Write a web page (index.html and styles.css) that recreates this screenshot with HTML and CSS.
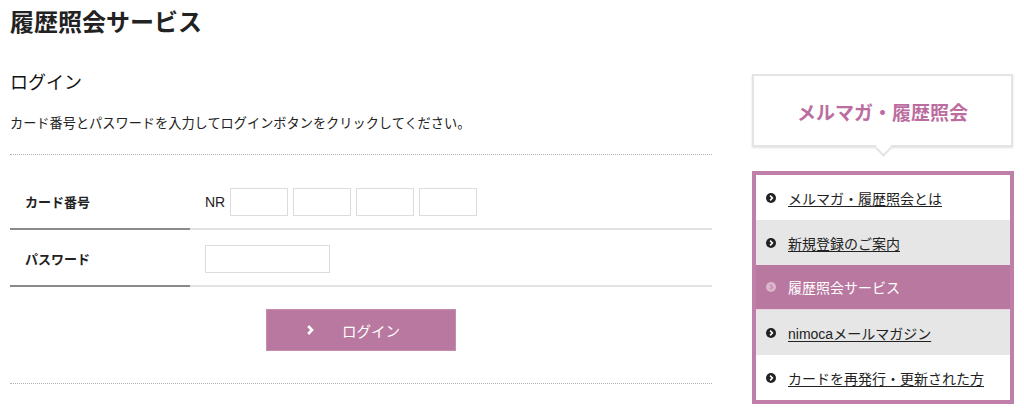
FILE: index.html
```html
<!DOCTYPE html>
<html lang="ja">
<head>
<meta charset="utf-8">
<title>履歴照会サービス</title>
<link rel="stylesheet" href="styles.css">
</head>
<body>
<div class="page">
  <main class="main">
    <h1 class="page-title">履歴照会サービス</h1>
    <h2 class="section-title">ログイン</h2>
    <p class="lead">カード番号とパスワードを入力してログインボタンをクリックしてください。</p>
    <div class="dotted"></div>
    <div class="form">
      <div class="row">
        <div class="label">カード番号</div>
        <div class="field">
          <span class="prefix">NR</span>
          <span class="input short"></span>
          <span class="input short"></span>
          <span class="input short"></span>
          <span class="input short"></span>
        </div>
      </div>
      <div class="row">
        <div class="label">パスワード</div>
        <div class="field">
          <span class="input long"></span>
        </div>
      </div>
    </div>
    <div class="actions">
      <button class="btn" type="button">
        <svg class="btn-chev" width="7" height="10" viewBox="0 0 7 10"><path d="M1.2 1 L5 5 L1.2 9" fill="none" stroke="#fff" stroke-width="2.6"/></svg>
        <span>ログイン</span>
      </button>
    </div>
    <div class="dotted"></div>
  </main>
  <aside class="side">
    <div class="bubble">メルマガ・履歴照会</div>
    <ul class="nav">
      <li class="nav-item white"><span class="dot"><svg width="10" height="10" viewBox="0 0 10 10"><path d="M4.1 2.6 L6.4 5 L4.1 7.4" fill="none" stroke="#fff" stroke-width="1.6"/></svg></span><a href="#">メルマガ・履歴照会とは</a></li>
      <li class="nav-item gray"><span class="dot"><svg width="10" height="10" viewBox="0 0 10 10"><path d="M4.1 2.6 L6.4 5 L4.1 7.4" fill="none" stroke="#fff" stroke-width="1.6"/></svg></span><a href="#">新規登録のご案内</a></li>
      <li class="nav-item active"><span class="dot"><svg width="10" height="10" viewBox="0 0 10 10"><path d="M4.1 2.6 L6.4 5 L4.1 7.4" fill="none" stroke="#c98db3" stroke-width="1.6"/></svg></span><span class="nav-current">履歴照会サービス</span></li>
      <li class="nav-item gray"><span class="dot"><svg width="10" height="10" viewBox="0 0 10 10"><path d="M4.1 2.6 L6.4 5 L4.1 7.4" fill="none" stroke="#fff" stroke-width="1.6"/></svg></span><a href="#">nimocaメールマガジン</a></li>
      <li class="nav-item white"><span class="dot"><svg width="10" height="10" viewBox="0 0 10 10"><path d="M4.1 2.6 L6.4 5 L4.1 7.4" fill="none" stroke="#fff" stroke-width="1.6"/></svg></span><a href="#">カードを再発行・更新された方</a></li>
    </ul>
  </aside>
</div>
</body>
</html>
```

FILE: styles.css
```css
* { box-sizing: border-box; }
html, body { margin: 0; padding: 0; background: #fff; }
body {
  font-family: "Liberation Sans", "Noto Sans CJK JP", sans-serif;
  color: #222;
}
.page {
  display: flex;
  padding: 0 10px;
  gap: 40px;
}
.main { width: 702px; }
.page-title {
  margin: 0;
  padding-top: 8px;
  font-size: 24px;
  line-height: 30px;
  font-weight: bold;
  color: #222;
}
.section-title {
  margin: 33px 0 0;
  font-size: 18px;
  line-height: 24px;
  font-weight: normal;
  color: #111;
}
.lead {
  margin: 20px 0 0;
  font-size: 13.2px;
  line-height: 18px;
  color: #222;
}
.dotted {
  border-top: 1px dotted #b0b0b0;
}
.lead + .dotted { margin-top: 21px; }
.form { margin-top: 18px; }
.row {
  display: flex;
  height: 57px;
}
.label {
  width: 180px;
  padding-left: 15px;
  display: flex;
  align-items: center;
  font-size: 13px;
  font-weight: bold;
  border-bottom: 2px solid #8a8a8a;
  padding-top: 2px;
}
.field {
  flex: 1;
  display: flex;
  align-items: center;
  gap: 5px;
  padding-left: 15px;
  border-bottom: 2px solid #e2e2e2;
  padding-top: 2px;
}
.prefix { font-size: 14px; color: #222; }
.input {
  display: block;
  height: 28px;
  border: 1px solid #dcdcdc;
  background: #fff;
}
.input.short { width: 58px; }
.input.long { width: 125px; }
.actions {
  display: flex;
  padding-left: 256px;
  margin-top: 22px;
}
.btn {
  width: 190px;
  height: 42px;
  display: flex;
  align-items: center;
  padding: 0 0 0 40px;
  border: 1px solid #c58cae;
  background: #b8789f;
  color: #fff;
  font-family: "Liberation Sans", "Noto Sans CJK JP", sans-serif;
  font-size: 14.5px;
  cursor: pointer;
}
.btn-chev { margin-right: 28px; }
.actions + .dotted { margin-top: 32px; }

.side { width: 262px; padding-top: 74px; }
.bubble {
  position: relative;
  width: 261px;
  height: 73px;
  border: 2px solid #e4e4e4;
  box-shadow: 0 1px 2px rgba(0,0,0,0.12);
  background: #fff;
  display: flex;
  align-items: center;
  justify-content: center;
  color: #bc6d9f;
  font-size: 19px;
  font-weight: bold;
  padding-top: 2px;
}
.bubble::after {
  content: "";
  position: absolute;
  left: 50%;
  bottom: -9px;
  width: 11px;
  height: 11px;
  margin-left: -6px;
  background: #fff;
  border-right: 2px solid #e4e4e4;
  border-bottom: 2px solid #e4e4e4;
  transform: rotate(45deg);
}
.nav {
  list-style: none;
  margin: 24px 0 0;
  padding: 0;
  border: 4px solid #c07fa8;
}
.nav-item {
  height: 45px;
  display: flex;
  align-items: center;
  padding-left: 10px;
  font-size: 14px;
}
.nav-item.white { background: #fff; }
.nav-item.gray { background: #e6e6e6; }
.nav-item.active { background: #b8789f; border-bottom: 1px solid #e8d2e0; }
.dot {
  width: 10px;
  height: 10px;
  border-radius: 50%;
  background: #222;
  display: flex;
  align-items: center;
  justify-content: center;
  margin-right: 12px;
  flex: none;
}
.dot svg { width: 10px; height: 10px; }
.active .dot { background: #dcb6cd; }
.nav-item a {
  color: #222;
  text-decoration: underline;
  text-underline-offset: 2px;
}
.nav-current { color: #fff; }
```
